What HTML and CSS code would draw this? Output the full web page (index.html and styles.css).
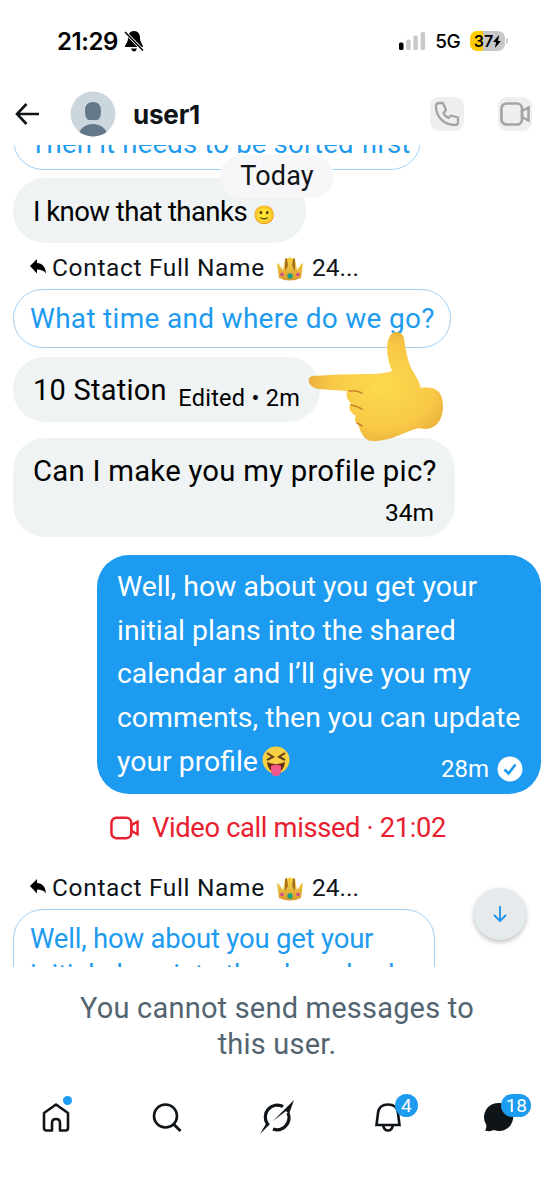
FILE: index.html
```html
<!DOCTYPE html>
<html lang="en">
<head>
<meta charset="utf-8">
<title>Messages</title>
<link rel="stylesheet" href="styles.css">
</head>
<body>
<svg class="defs" width="0" height="0">
  <defs>
    <linearGradient id="gold" x1="0" y1="0" x2="0" y2="1"><stop offset="0" stop-color="#f9d84c"/><stop offset="1" stop-color="#d79a2b"/></linearGradient>
    <radialGradient id="skin" cx=".55" cy=".5" r=".6"><stop offset="0" stop-color="#fcdb4f"/><stop offset=".65" stop-color="#f8c846"/><stop offset="1" stop-color="#e7a83a"/></radialGradient>
    <symbol id="reply" viewBox="0 0 16 16"><path d="M7 0v4c5 0 8.500 3.500 9 10.500-2-3-5-4-9-4V14.500L0 7z"/></symbol>
    <symbol id="crown" viewBox="0 0 28 26">
      <path fill="url(#gold)" d="M3 22 1 8l1-1 5 7 2-11 2-1 3 4 3-4 2 1 2 11 5-7 1 1-2 14q-11 5-22 0z"/>
      <path fill="#a8701d" d="m9 3 2-1 1 8-3 5zm10 0-2-1-1 8 3 5z"/>
      <circle cx="14" cy="4" r="2.500" fill="#f6cc3a"/><circle cx="14" cy="20" r="2.700" fill="#16a085"/>
      <circle cx="6" cy="18.500" r="1.800" fill="#d4499a"/><circle cx="22" cy="18.500" r="1.800" fill="#d4499a"/>
    </symbol>
    <symbol id="video" viewBox="0 0 30 24"><rect x="1.500" y="1.500" width="20.500" height="21" rx="5" fill="none" stroke="currentColor" stroke-width="2.600"/><path d="m22 9 6.500-3.500v13L22 15z" fill="none" stroke="currentColor" stroke-width="2.500"/></symbol>
  </defs>
</svg>
<div class="screen">
  <div class="status">
    <span class="clock">21:29</span>
    <svg class="mute" viewBox="0 0 20 22"><path d="M10 1c4 0 6 3 6 7 0 5 3 6 3 9H1c0-3 3-4 3-9 0-4 2-7 6-7zM7 18.500h6q-1 3-3 3t-3-3z"/><path d="m1 2 18 18.500" stroke="#fff" stroke-width="3.200"/><path d="m1 2 18 18.500" stroke="#000" stroke-width="1.500"/></svg>
    <span class="grow"></span>
    <svg class="signal" viewBox="0 0 27 18"><rect y="10.500" width="4.500" height="7.500" rx="1.500"/><g fill="#c9c9c9"><rect x="7.200" y="7.500" width="4.500" height="10.500" rx="1.500"/><rect x="14.400" y="3.500" width="4.500" height="14.500" rx="1.500"/><rect x="21.600" width="4.500" height="18" rx="1.500"/></g></svg>
    <span class="net">5G</span>
    <span class="battery">37<svg viewBox="0 0 8 13"><path d="M6 0 0 7h3l-1 6 6-7H5z"/></svg></span><i class="tip"></i>
  </div>
  <header class="header">
    <svg class="back" viewBox="0 0 24 24"><path d="M11.500 2 2 12l9.500 10M2 12h22" fill="none" stroke="#0f1419" stroke-width="2.600"/></svg>
    <svg class="avatar" viewBox="0 0 46 46"><clipPath id="face"><circle cx="23" cy="23" r="22.500"/></clipPath><g clip-path="url(#face)"><path fill="#cbd6dd" d="M0 0h46v46H0z"/><path fill="#64788a" d="M23 11c6 0 8 4 8 9 0 6-2 9-4 9h-8c-2 0-4-3-4-9 0-5 2-9 8-9zM8 46c1-8 7-13 15-13s14 5 15 13z"/></g></svg>
    <h1 class="name">user1</h1>
    <span class="grow"></span>
    <span class="action"><svg class="phone" viewBox="0 0 26 26"><path d="M5 2h4l3 7-2.500 3c1 2.500 2.500 4 5 5l2.500-2.500 7 2v5c0 1.500-1 2.500-3 2.500C10 24 2 16 2 5q0-3 3-3z" fill="none" stroke="currentColor" stroke-width="2.300" stroke-linejoin="round"/></svg></span>
    <span class="action cam"><svg class="vid"><use href="#video"/></svg></span>
  </header>
  <main class="chat">
    <div class="quote first">Then it needs to be sorted first</div>
    <div class="bubble one">I know that thanks <span class="mini">🙂</span></div>
    <div class="label top"><svg class="reply"><use href="#reply"/></svg><span class="who">Contact Full Name</span><svg class="crown"><use href="#crown"/></svg><span>24...</span></div>
    <div class="quote second">What time and where do we go?</div>
    <div class="bubble two"><span>10 Station</span><small>Edited • 2m</small></div>
    <div class="bubble three"><span>Can I make you my profile pic?</span><small>34m</small></div>
    <div class="sent">Well, how about you get your<br>initial plans into the shared<br>calendar and I’ll give you my<br>comments, then you can update<br>your profile<svg class="laugh" viewBox="0 0 30 30"><circle cx="15" cy="14" r="13.500" fill="#fbd044"/><path d="m6 7 6 4-6 3m18-7-6 4 6 3" fill="none" stroke="#60401a" stroke-width="2"/><path d="M6 16q9 4 18 0-1 10-9 10T6 16z" fill="#693018"/><path d="M10 20q5-3 10 0v5q0 5-5 5t-5-5z" fill="#f2578b"/></svg>
      <div class="stamp">28m<svg viewBox="0 0 26 26"><circle cx="13" cy="13" r="12.500" fill="#fff"/><path d="m7.500 13.500 4 4 7-9" fill="none" stroke="#1d9bf0" stroke-width="2.600"/></svg></div>
    </div>
    <div class="missed"><svg><use href="#video"/></svg><span>Video call missed · 21:02</span></div>
    <div class="label bottom"><svg class="reply"><use href="#reply"/></svg><span class="who">Contact Full Name</span><svg class="crown"><use href="#crown"/></svg><span>24...</span></div>
    <div class="quote last">Well, how about you get your<br>initial plans into the shared cal</div>
    <div class="today">Today</div>
    <svg class="hand" viewBox="0 0 150 120"><path fill="url(#skin)" d="M12 50q29-2 57-2 15 0 23-3c-5-12-7-27-2-35 3-6 12-5 14 2 2 16 5 28 10 35q5 7 7 15c14-2 22 3 22 18 0 16-9 26-24 22-12 2-25 13-46 13-7 0-11-4-15-17-3-2-4-5-2-8-7-4-8-9-5-13-4-3-5-7-4-12L18 63C8 61 6 52 12 50z"/><path d="M49 65q7-1 13 2m-11 12q6 1 11 4m-5 14 5 3" fill="none" stroke="#c98529" stroke-width="1.500" stroke-linecap="round"/></svg>
    <div class="down"><svg viewBox="0 0 16 18"><path d="M8 1v15M2 10l6 6 6-6" fill="none" stroke="#1d8fe6" stroke-width="1.800"/></svg></div>
  </main>
  <p class="notice">You cannot send messages to<br>this user.</p>
  <nav class="tabs">
    <span class="tab"><svg viewBox="0 0 32 32"><path d="M4 12 16 3.500 28 12v15q0 2.500-2.500 2.500H20V22q0-4-4-4t-4 4v7.500H6.500Q4 29.500 4 27z" fill="none" stroke="#0f1419" stroke-width="2.600" stroke-linejoin="round"/></svg><i class="dot"></i></span>
    <span class="tab"><svg viewBox="0 0 32 32"><circle cx="14.500" cy="15" r="11.500" fill="none" stroke="#0f1419" stroke-width="2.600"/><path d="m23 23.500 6.500 6.500" stroke="#0f1419" stroke-width="2.800"/></svg></span>
    <span class="tab"><svg class="slash" viewBox="0 0 36 36"><path d="M24 7.500A12 12 0 0 0 8.500 25m5.500 5A12 12 0 0 0 29 14" fill="none" stroke="#0f1419" stroke-width="3.200"/><path d="M1 35 8 23l3 2zM14 22 35 1l-5 14-3-3z" fill="#0f1419"/></svg></span>
    <span class="tab"><svg viewBox="0 0 32 32"><path d="M4.500 24 6 12q1-8.500 10-8.500T26 12l1.500 12zM11 24q1 5.500 5 5.500t5-5.500" fill="none" stroke="#0f1419" stroke-width="2.600"/></svg><b class="badge">4</b></span>
    <span class="tab"><svg viewBox="0 0 32 32"><path fill="#0f1419" d="M16 2a14 14 0 1 1-5 27q-4 2-9 .500Q4 27 3 23A14 14 0 0 1 16 2z"/></svg><b class="badge wide">18</b></span>
  </nav>
</div>
</body>
</html>
```

FILE: styles.css
```css
* { box-sizing: border-box; }
body { margin: 0; background: #fff; color: #0f1419; font-family: Roboto, "Liberation Sans", sans-serif; }
.defs { position: absolute; }
.screen { width: 554px; height: 1200px; display: flex; flex-direction: column; overflow: hidden; }
.grow { flex: 1; }
svg { flex: none; }

.status { height: 82px; display: flex; align-items: center; padding: 0 46px 0 57px; color: #000; }
.clock { font: 600 24px Inter, sans-serif; letter-spacing: -.4px; width: 63px; }
.mute { width: 20px; height: 22px; margin-left: 4px; }
.signal { width: 27px; height: 18px; }
.net { font: 500 19px Inter, sans-serif; margin: 1px 10px 0 9px; letter-spacing: -.6px; }
.battery { width: 35px; height: 20px; border-radius: 7px; background: linear-gradient(90deg, #ffcc00 37%, #c8c8c8 37%); display: flex; align-items: center; justify-content: center; font: 600 16px Inter, sans-serif; }
.battery svg { width: 8px; height: 13px; }
.tip { width: 2px; height: 6px; margin-left: 1px; background: #ccc; border-radius: 0 2px 2px 0; }

.header { height: 63px; display: flex; align-items: center; padding: 1px 22px 0 15px; }
.back { width: 24px; height: 24px; }
.avatar { width: 46px; height: 46px; margin-left: 31px; }
.name { margin: 0 0 0 17px; font: 700 26px Inter, sans-serif; letter-spacing: -.2px; }
.action { width: 34px; height: 34px; border-radius: 9px; background: #efeff0; color: #a3a4a6; display: flex; align-items: center; justify-content: center; }
.cam { margin-left: 34px; }
.phone { width: 26px; height: 26px; }
.vid { width: 30px; height: 24px; }

.chat { position: relative; height: 822px; overflow: hidden; display: flex; flex-direction: column; align-items: flex-start; padding-left: 13px; font-size: 28px; white-space: nowrap; }
.chat > * { flex: none; }
.quote { border: 1px solid #9fcff5; border-radius: 30px; color: #1d9bf0; padding: 0 16px; }
.first { width: 408px; height: 64px; margin-top: -39px; line-height: 73px; font-size: 27.5px; letter-spacing: .2px; }
.bubble { background: #eff3f4; border-radius: 32px; color: #000; padding: 0 20px; }
.one { width: 293px; height: 65px; margin-top: 8px; line-height: 67px; font-size: 27.5px; letter-spacing: -.55px; }
.mini { font-size: 18px; }
.label { height: 30px; display: flex; align-items: center; padding-left: 17px; font-size: 24.5px; }
.top { margin-top: 9px; }
.reply { width: 16px; height: 16px; margin-right: 6px; }
.who { width: 217px; letter-spacing: .65px; }
.crown { width: 28px; height: 26px; margin: 4px 8px 0 7px; }
.second { width: 438px; height: 59px; margin-top: 7px; line-height: 58px; font-size: 28px; letter-spacing: .3px; }
.two { width: 307px; height: 65px; margin-top: 9px; display: flex; align-items: center; justify-content: space-between; font-size: 29px; letter-spacing: .25px; }
.bubble small { font-size: 23.5px; }
.two small { margin-top: 16px; }
.three { width: 442px; height: 99px; margin-top: 16px; display: flex; flex-direction: column; justify-content: space-between; padding: 17px 21px 10px 20px; line-height: 32px; font-size: 29.3px; letter-spacing: .25px; }
.bubble.three small { align-self: flex-end; line-height: 28px; font-size: 24.5px; letter-spacing: 0; }
.sent { position: relative; width: 444px; height: 239px; margin: 18px 0 0 84px; padding: 10px 20px; border-radius: 32px; background: #1d9bf0; color: #fff; line-height: 43.7px; font-size: 28.4px; }
.laugh { width: 30px; height: 30px; margin-left: 3px; vertical-align: -5px; }
.stamp { position: absolute; right: 18px; bottom: 12px; display: flex; gap: 8px; font-size: 24px; line-height: 26px; }
.stamp svg { width: 26px; height: 26px; }
.missed { height: 34px; margin: 17px 0 0 97px; display: flex; align-items: center; gap: 13px; color: #e8202f; font-size: 27.3px; letter-spacing: -.35px; }
.missed svg { width: 29px; height: 24px; }
.bottom { margin-top: 27px; }
.last { width: 422px; height: 100px; margin-top: 7px; padding-top: 11px; line-height: 36px; font-size: 27.5px; letter-spacing: -.2px; }
.today { position: absolute; left: 220px; top: 10px; width: 114px; height: 43px; border-radius: 22px; background: #f7f7f9; text-align: center; line-height: 43px; font-size: 27px; letter-spacing: .2px; }
.hand { position: absolute; left: 300px; top: 181px; width: 150px; height: 120px; }
.down { position: absolute; left: 474px; top: 743px; width: 52px; height: 52px; border-radius: 50%; background: #e5eaec; box-shadow: 0 2px 5px #0004; display: grid; place-items: center; }
.down svg { width: 16px; height: 18px; }

.notice { margin: 23px 0 0; height: 92px; text-align: center; color: #536471; font-size: 29px; line-height: 36px; letter-spacing: .2px; }
.tabs { display: flex; padding: 17px 0 0 1px; }
.tab { position: relative; flex: 1; height: 36px; display: flex; align-items: center; justify-content: center; }
.tab svg { width: 32px; height: 32px; }
.tab .slash { width: 36px; height: 36px; }
.dot { position: absolute; right: 40px; top: -3px; width: 9px; height: 9px; border-radius: 50%; background: #1d9bf0; }
.badge { position: absolute; left: 62px; top: -5px; width: 23px; height: 23px; border-radius: 12px; background: #1d9bf0; color: #fff; font-size: 19px; font-weight: 400; line-height: 23px; text-align: center; }
.wide { left: 58px; width: 30px; }
```
